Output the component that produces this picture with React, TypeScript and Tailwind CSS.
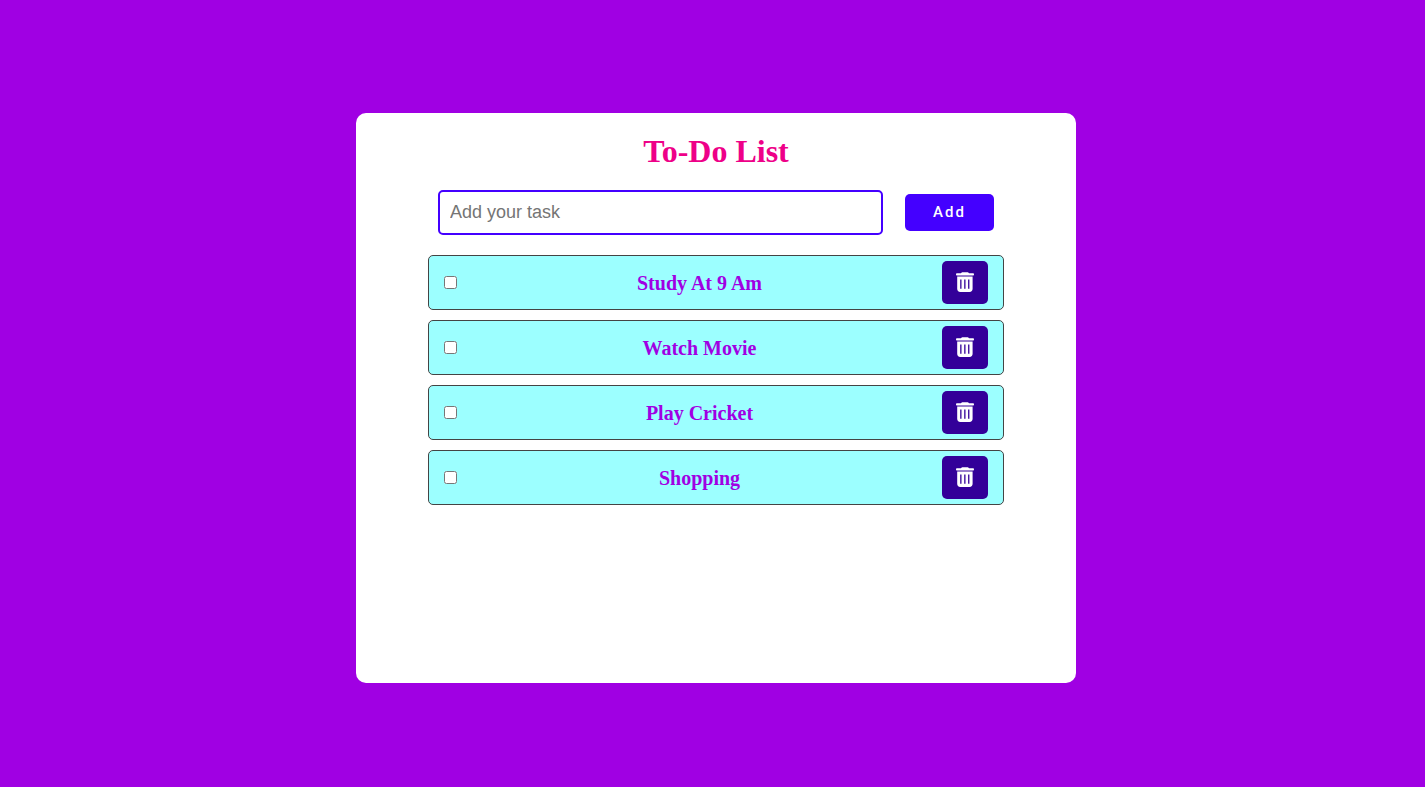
const tasks = ["Study At 9 Am", "Watch Movie", "Play Cricket", "Shopping"];

function TrashIcon() {
  return (
    <svg width="18" height="20" viewBox="0 0 18 20" fill="currentColor" aria-hidden="true">
      <path d="M5 1.3C5.5 .5 6 .2 6.8 .2h4.4c.8 0 1.3.3 1.8 1.1h4.2c.5 0 .8.4.8.9v.4c0 .5-.3.9-.8.9H.8C.3 3.5 0 3.1 0 2.6v-.4c0-.5.3-.9.8-.9z" />
      <path
        fillRule="evenodd"
        d="M1.2 4.6h15.4v12.2c0 2-1.1 3.2-3.1 3.2H4.3c-2 0-3.1-1.2-3.1-3.2zM4.2 7.4v9.4h1.3V7.4zM8.2 7.4v9.4h1.3V7.4zM12.1 7.4v9.4h1.3V7.4z"
      />
    </svg>
  );
}

export default function App() {
  return (
    <div className="flex min-h-screen items-center justify-center bg-[#a000e3] pl-[7px] pt-[9px]">
      <main className="min-h-[570px] w-full max-w-[720px] rounded-[10px] bg-white px-[72px] pt-5">
        <h1 className="text-center font-['Liberation_Serif',serif] text-[32px] leading-9 font-bold text-[#ee0088]">
          To-Do List
        </h1>
        <form className="mt-[21px] flex items-center gap-[22px] px-[10px]" onSubmit={(e) => e.preventDefault()}>
          <input
            type="text"
            aria-label="Add your task"
            placeholder="Add your task"
            className="h-[45px] min-w-0 flex-1 rounded-[5px] border-2 border-[#4400ff] px-[10px] font-['Liberation_Sans',sans-serif] text-lg outline-none placeholder:text-[#757575]"
          />
          <button
            type="submit"
            className="h-[37px] w-[89px] rounded-[5px] bg-[#4400ff] font-['Roboto',sans-serif] text-[15px] font-medium tracking-[2px] text-white"
          >
            Add
          </button>
        </form>
        <ul className="mt-5 flex flex-col gap-[10px]">
          {tasks.map((task, i) => (
            <li
              key={task}
              className="flex h-[55px] items-center justify-between rounded-[5px] border border-[#444444] bg-[#9cffff] px-[15px]"
            >
              <input id={`task-${i}`} type="checkbox" className="size-[13px]" />
              <label
                htmlFor={`task-${i}`}
                className="font-['Baskerville','Liberation_Serif',serif] text-xl font-bold text-[#a000e3]"
              >
                {task}
              </label>
              <button
                type="button"
                aria-label={`Delete ${task}`}
                className="flex h-[43px] w-[46px] items-center justify-center rounded-[5px] bg-[#330099] pb-[2px] text-white"
              >
                <TrashIcon />
              </button>
            </li>
          ))}
        </ul>
      </main>
    </div>
  );
}
